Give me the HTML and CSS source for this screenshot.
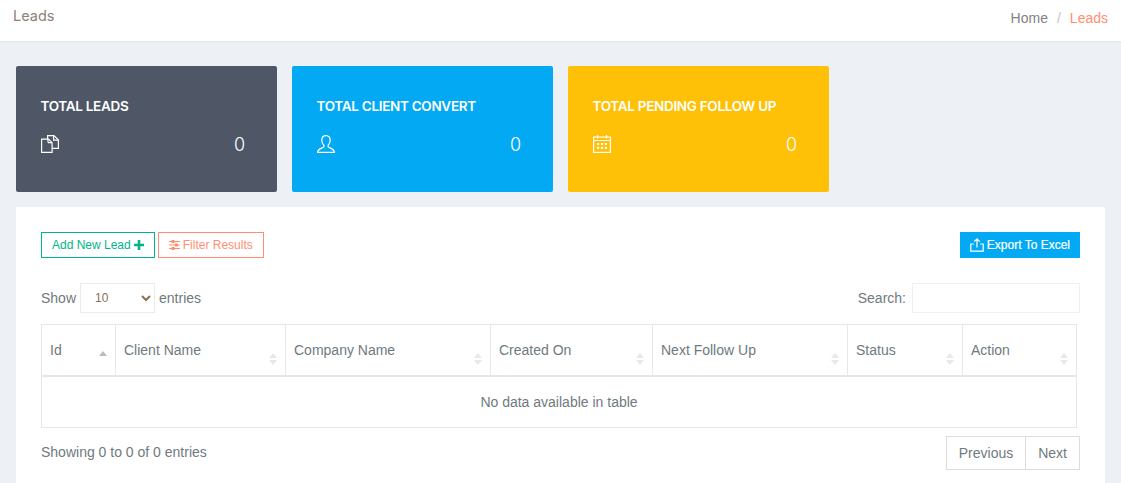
FILE: index.html
```html
<!DOCTYPE html>
<html lang="en">
<head>
    <meta charset="UTF-8">
    <meta name="viewport" content="width=device-width, initial-scale=1.0">
    <title>Leads</title>
    <link rel="stylesheet" href="styles.css">
</head>
<body>
    <div class="page-title-bar">
        <div class="page-title">Leads</div>
        <div class="breadcrumb">
            <span class="crumb">Home</span>
            <span class="crumb-sep">/</span>
            <span class="crumb-active">Leads</span>
        </div>
    </div>

    <div class="content">
        <div class="stat-row">
            <div class="stat-card stat-dark">
                <div class="stat-title">TOTAL LEADS</div>
                <div class="stat-body">
                    <svg class="stat-icon" viewBox="0 0 18 18" fill="none" stroke="#fff" stroke-width="1.2">
                        <path d="M.6 4.100h6.900l3.600 3.600v9.700H.6z"/>
                        <path d="M7 7.600h4M7 4.200v3.400"/>
                        <path d="M6.600 4V.6h6.400l4.400 4.400v8.400h-6.200"/>
                        <path d="M12.600 .8v4.400h4.600"/>
                    </svg>
                    <span class="stat-count">0</span>
                </div>
            </div>
            <div class="stat-card stat-blue">
                <div class="stat-title">TOTAL CLIENT CONVERT</div>
                <div class="stat-body">
                    <svg class="stat-icon" viewBox="0 0 18 18" fill="none" stroke="#fff" stroke-width="1.2">
                        <path d="M9 .6c-2.800 0-4.200 2-4.200 4.600 0 2.200.9 4 2.100 5v1.600c-1.200 1.200-6.300 2-6.300 5.500h16.800c0-3.500-5.100-4.300-6.300-5.500v-1.600c1.200-1 2.100-2.800 2.100-5 0-2.600-1.400-4.600-4.200-4.600z"/>
                    </svg>
                    <span class="stat-count">0</span>
                </div>
            </div>
            <div class="stat-card stat-yellow">
                <div class="stat-title">TOTAL PENDING FOLLOW UP</div>
                <div class="stat-body">
                    <svg class="stat-icon" viewBox="0 0 18 18" fill="none" stroke="#fff" stroke-width="1.2">
                        <rect x=".6" y="2.100" width="16.800" height="15.300"/>
                        <path d="M.6 5.500h16.800M4.500 0v3.500M13.500 0v3.500"/>
                        <path stroke-width="2.200" stroke-dasharray="2.200 1.700" d="M4 9h10M4 12.800h10"/>
                    </svg>
                    <span class="stat-count">0</span>
                </div>
            </div>
        </div>

        <div class="panel">
            <div class="toolbar">
                <div class="toolbar-left">
                    <button class="btn btn-add">Add New Lead
                        <svg class="btn-icon" viewBox="0 0 10 10" fill="#00b58a"><path d="M3.700 0h2.600v3.700H10v2.600H6.300V10H3.700V6.300H0V3.700h3.700z"/></svg>
                    </button>
                    <button class="btn btn-filter">
                        <svg class="filter-icon" viewBox="0 0 11 10" fill="#ff8e73"><path d="M0 1h11v1H0zM0 4.500h11v1H0zM0 8h11v1H0z"/><path d="M2.500 0h3v3h-3zM6 3.500h3v3H6zM2.500 7h3v3h-3z"/></svg>
                        Filter Results
                    </button>
                </div>
                <button class="btn btn-export">
                    <svg class="export-icon" viewBox="0 0 14 14" fill="none" stroke="#fff" stroke-width="1.2"><path d="M3.800 6H.8v7.200h12.400V6h-3M7 9.500V1M4.200 3.600 7 .9l2.800 2.700"/></svg>
                    Export To Excel
                </button>
            </div>

            <div class="table-controls">
                <label class="control-label">Show
                    <select class="length-select">
                        <option>10</option>
                    </select>
                    entries
                </label>
                <label class="control-label">Search:
                    <input class="search-input" type="text">
                </label>
            </div>

            <table class="leads-table">
                <thead>
                    <tr>
                        <th class="col-id sort-asc">Id</th>
                        <th class="col-client">Client Name</th>
                        <th class="col-company">Company Name</th>
                        <th class="col-created">Created On</th>
                        <th class="col-next">Next Follow Up</th>
                        <th class="col-status">Status</th>
                        <th class="col-action">Action</th>
                    </tr>
                </thead>
                <tbody>
                    <tr>
                        <td class="empty-row" colspan="7">No data available in table</td>
                    </tr>
                </tbody>
            </table>

            <div class="table-footer">
                <div class="table-info">Showing 0 to 0 of 0 entries</div>
                <div class="pagination">
                    <a class="page-link">Previous</a>
                    <a class="page-link">Next</a>
                </div>
            </div>
        </div>
    </div>
</body>
</html>
```

FILE: styles.css
```css
html, body {
    height: 483px;
    overflow: hidden;
}
body {
    margin: 0;
    font-family: "Liberation Sans", Arial, sans-serif;
    font-size: 14px;
    color: #6f7a80;
    background-color: #edf1f5;
}
.page-title-bar {
    height: 41px;
    box-sizing: border-box;
    padding: 0 13px;
    display: flex;
    justify-content: space-between;
    background-color: #fff;
    box-shadow: 0 1px 2px rgba(0, 0, 0, 0.04);
}
.page-title {
    font-family: Inter, sans-serif;
    font-size: 14.5px;
    line-height: 32px;
    color: #8d8078;
}
.breadcrumb {
    font-size: 14px;
    line-height: 36px;
    display: flex;
    gap: 9px;
}
.crumb {
    color: #857f86;
}
.crumb-sep {
    color: #c4c4c4;
}
.crumb-active {
    color: #ff8e73;
}
.content {
    padding: 25px 16px 0;
}
.stat-row {
    display: flex;
    gap: 15px;
    margin-bottom: 15px;
}
.stat-card {
    width: 261px;
    height: 126px;
    box-sizing: border-box;
    padding: 32px 25px 0;
    border-radius: 2px;
    color: #fff;
}
.stat-dark {
    background-color: #4f5767;
}
.stat-blue {
    background-color: #03a9f3;
}
.stat-yellow {
    background-color: #fec107;
}
.stat-title {
    font-family: Inter, sans-serif;
    font-weight: 600;
    font-size: 13.5px;
    line-height: 16px;
    letter-spacing: -0.3px;
    margin-left: -0.5px;
}
.stat-body {
    display: flex;
    justify-content: space-between;
    align-items: flex-start;
    margin-top: 21px;
    padding-right: 7px;
}
.stat-icon {
    width: 18px;
    height: 18px;
    display: block;
}
.stat-count {
    font-family: Inter, sans-serif;
    font-size: 18px;
    line-height: 24px;
    font-weight: 300;
    margin-top: -2px;
}
.panel {
    height: 300px;
    box-sizing: border-box;
    padding: 25px;
    background-color: #fff;
    border-radius: 2px;
}
.toolbar {
    display: flex;
    justify-content: space-between;
    width: 1039px;
}
.toolbar-left {
    display: flex;
    gap: 3px;
}
.btn {
    height: 26px;
    box-sizing: border-box;
    padding: 0 10px;
    background: #fff;
    font-family: "Liberation Sans", Arial, sans-serif;
    font-size: 12px;
    display: flex;
    align-items: center;
    gap: 3px;
    border-radius: 0;
}
.btn-add {
    border: 1px solid #00b58a;
    color: #00b58a;
}
.btn-filter {
    border: 1px solid #ff8e73;
    color: #ff8e73;
}
.btn-export {
    padding: 0 9px;
    border: 1px solid #03a9f3;
    background-color: #03a9f3;
    color: #fff;
    -webkit-text-stroke: 0.2px #fff;
}
.btn-icon {
    width: 10px;
    height: 10px;
}
.filter-icon {
    width: 11px;
    height: 10px;
}
.export-icon {
    width: 14px;
    height: 14px;
}
.table-controls {
    display: flex;
    justify-content: space-between;
    align-items: center;
    width: 1039px;
    margin-top: 25px;
    height: 30px;
}
.control-label {
    display: flex;
    align-items: center;
    gap: 4px;
    font-size: 14px;
}
.length-select {
    width: 75px;
    height: 30px;
    box-sizing: border-box;
    margin: 0;
    padding: 0 0 0 10px;
    background-color: #fff;
    border: 1px solid #e9ecef;
    font-family: "Liberation Sans", Arial, sans-serif;
    font-size: 12px;
    color: #8a6f55;
}
.search-input {
    width: 168px;
    height: 30px;
    box-sizing: border-box;
    margin: 0 0 0 2px;
    border: 1px solid #f0f0f0;
}
.leads-table {
    width: 1035px;
    margin-top: 11px;
    border-collapse: collapse;
    table-layout: fixed;
    font-size: 14px;
}
.leads-table th {
    position: relative;
    height: 51px;
    box-sizing: border-box;
    padding: 0 8px;
    border: 1px solid #e4e8ec;
    border-bottom-width: 2px;
    font-weight: 400;
    text-align: left;
    vertical-align: middle;
    color: #6f7a80;
}
/* sort arrows */
.leads-table th::before,
.leads-table th::after {
    content: "";
    position: absolute;
    right: 8px;
    border-left: 4px solid transparent;
    border-right: 4px solid transparent;
}
.leads-table th::before {
    top: 28px;
    border-bottom: 5px solid #e8e8e8;
}
.leads-table th::after {
    top: 35px;
    border-top: 5px solid #e8e8e8;
}
.leads-table th.sort-asc::before {
    top: 26px;
    border-bottom-color: #bdbdbd;
}
.leads-table th.sort-asc::after {
    display: none;
}
.col-id { width: 74px; }
.col-client { width: 170px; }
.col-company { width: 205px; }
.col-created { width: 162px; }
.col-next { width: 195px; }
.col-status { width: 115px; }
.col-action { width: 114px; }
.empty-row {
    height: 52px;
    box-sizing: border-box;
    border: 1px solid #e4e8ec;
    text-align: center;
    color: #6f7a80;
}
.table-footer {
    display: flex;
    justify-content: space-between;
    width: 1039px;
    margin-top: 8px;
}
.table-info {
    line-height: 33px;
}
.pagination {
    display: flex;
}
.page-link {
    height: 34px;
    box-sizing: border-box;
    padding: 0 12px;
    border: 1px solid #ddd;
    line-height: 33px;
    color: #6f7a80;
}
.page-link + .page-link {
    border-left: 0;
}
```
